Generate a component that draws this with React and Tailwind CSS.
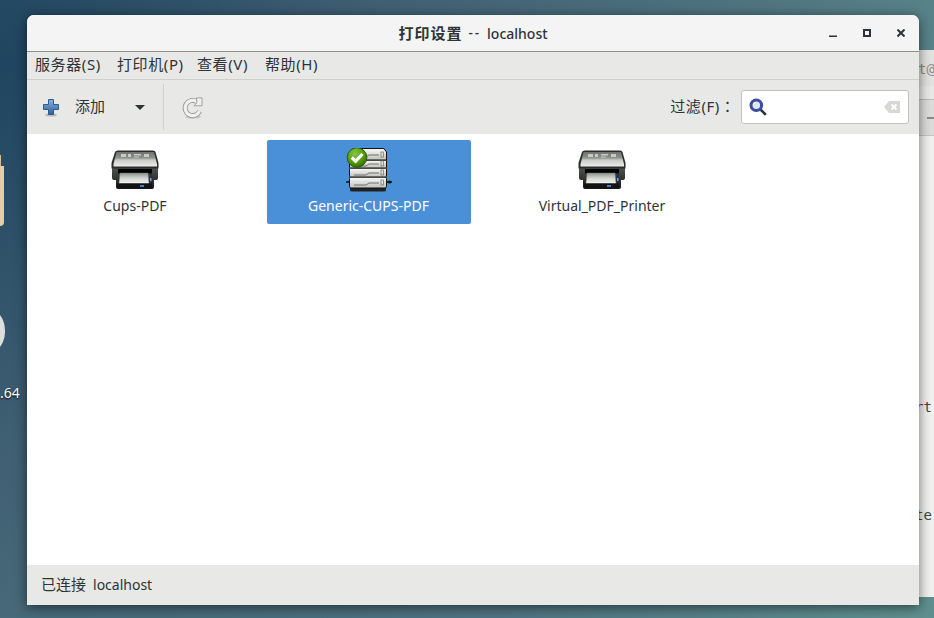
import React from 'react';

const FONT = "font-['Noto_Sans','Noto_Sans_CJK_SC',sans-serif]";

const MENUS = [
  { label: '服务器(S)', width: 'w-[82px]' },
  { label: '打印机(P)', width: 'w-[80px]' },
  { label: '查看(V)', width: 'w-[68px]' },
  { label: '帮助(H)', width: 'w-[66px]' },
];

const PRINTERS = [
  { name: 'Cups-PDF', icon: 'printer' },
  { name: 'Generic-CUPS-PDF', icon: 'server', selected: true },
  { name: 'Virtual_PDF_Printer', icon: 'printer' },
];

function PrinterIcon() {
  return (
    <svg width="48" height="40" viewBox="0 0 48 40">
      <defs>
        <linearGradient id="ptop" x1="0" y1="0" x2="0" y2="1">
          <stop offset="0" stopColor="#70726f" />
          <stop offset="0.4" stopColor="#8f918d" />
          <stop offset="0.55" stopColor="#c9cac6" />
          <stop offset="1" stopColor="#eeeeec" />
        </linearGradient>
        <linearGradient id="pbody" x1="0" y1="0" x2="0" y2="1">
          <stop offset="0" stopColor="#50524f" />
          <stop offset="1" stopColor="#161716" />
        </linearGradient>
        <linearGradient id="ppaper" x1="0" y1="0" x2="0" y2="1">
          <stop offset="0" stopColor="#8f928c" />
          <stop offset="0.5" stopColor="#d2d4cf" />
          <stop offset="1" stopColor="#f4f4f2" />
        </linearGradient>
      </defs>
      <path d="M1 18 H47 V28 Q47 30 44 30 H43 V37 Q43 39 41 39 H7 Q5 39 5 37 V30 H3 Q1 30 1 28 Z" fill="url(#pbody)" />
      <path d="M4 2 Q4.5 .5 7 .5 H42 Q44 .5 44.5 2 L47.5 13 V18.5 H.5 V13 Z" fill="#2b2c2b" />
      <path d="M5.5 2 H43 L46 14 V16.5 H2.5 V14 Z" fill="url(#ptop)" />
      <path d="M10 4 h5 v3 h-5 z M17 4 h3 v3 h-3 z M23 4 h7 v1.4 h-7 z M23 6.4 h5 v1 h-5 z M33 4 h5 v3 h-5 z" fill="#c9cac7" />
      <path d="M7 19 H41 V23.5 H7 Z" fill="#030303" />
      <path d="M9 23 H37 L38 33.5 H8 Z" fill="url(#ppaper)" stroke="#777" strokeWidth="0.4" />
      <path d="M6 33.5 H41 V38 H6 Z" fill="#121312" />
      <path d="M29 35 H33 V37 H29 Z" fill="#3f82d0" />
      <path d="M38.5 24 H41 V32 H38.5 Z" fill="#1d3550" />
      <path d="M39 28 H40.5 V31 H39 Z" fill="#6fa8e6" />
    </svg>
  );
}

function ServerIcon() {
  return (
    <svg width="46" height="44" viewBox="0 0 46 44">
      <defs>
        <linearGradient id="stray" x1="0" y1="0" x2="0" y2="1">
          <stop offset="0" stopColor="#fbfbfa" />
          <stop offset="1" stopColor="#bfc0bc" />
        </linearGradient>
        <radialGradient id="sgreen" cx="0.4" cy="0.3" r="0.8">
          <stop offset="0" stopColor="#8bc34a" />
          <stop offset="0.6" stopColor="#4e9a06" />
          <stop offset="1" stopColor="#2d5f04" />
        </radialGradient>
      </defs>
      <path d="M-1 34 H4 M41 34 H46" stroke="#111" strokeWidth="1.4" />
      <circle cx="43.5" cy="34" r="1.6" fill="#111" />
      <path d="M4 40 H40 V42 Q40 43.5 38 43.5 H6 Q4 43.5 4 42 Z" fill="#222" />
      <rect x="3.5" y="29" width="37" height="11" rx="1.5" fill="url(#stray)" stroke="#111" />
      <rect x="3.5" y="20" width="37" height="9" rx="1" fill="url(#stray)" stroke="#111" />
      <rect x="3.5" y="12" width="37" height="8" rx="1" fill="url(#stray)" stroke="#111" />
      <path d="M6 1.5 Q6.5 .5 8 .5 H37 Q38.5 .5 39 2 L40.5 4 V12 H3.5 V4 Z" fill="url(#stray)" stroke="#111" />
      {[9, 18, 27, 37].map((y) => (
        <g key={y}>
          <path d={`M8 ${y} H20 L23 ${y - 2} H33`} fill="none" stroke="#63655f" strokeWidth="0.9" />
          <rect x="35" y={y - 5} width="2.4" height="5" fill="none" stroke="#6e6e6e" strokeWidth="0.7" />
        </g>
      ))}
      <circle cx="11" cy="9.5" r="9.8" fill="url(#sgreen)" stroke="#274f05" strokeWidth="0.9" />
      <path d="M5.8 9.5 L9.6 13.2 L16.5 6" fill="none" stroke="#fff" strokeWidth="3.2" />
    </svg>
  );
}

function AddIcon() {
  return (
    <svg width="16" height="18" viewBox="0 0 16 18">
      <defs>
        <linearGradient id="plus" x1="0" y1="0" x2="0" y2="1">
          <stop offset="0" stopColor="#8fb1d9" />
          <stop offset="1" stopColor="#2c5f9e" />
        </linearGradient>
      </defs>
      <ellipse cx="8" cy="16" rx="6" ry="1.6" fill="#b8b8b5" />
      <path d="M5.5 .5 H10.5 V5.5 H15.5 V10.5 H10.5 V15.5 H5.5 V10.5 H.5 V5.5 H5.5 Z" fill="url(#plus)" stroke="#2f5b93" />
    </svg>
  );
}

function RefreshIcon() {
  return (
    <svg width="22" height="22" viewBox="0 0 22 22">
      <ellipse cx="11" cy="20.2" rx="8" ry="1.6" fill="#c8c8c5" />
      <path d="M17.6 14.2 A7.6 7.6 0 1 1 14.8 4.6" fill="none" stroke="#989896" strokeWidth="5" />
      <path d="M17.6 14.2 A7.6 7.6 0 1 1 14.8 4.6" fill="none" stroke="#f0f0ef" strokeWidth="3.2" />
      <path d="M14.2 1 L20 .8 V8.8 H12 L15 5.6 Z" fill="#f0f0ef" stroke="#989896" strokeWidth="0.9" />
    </svg>
  );
}

function SearchIcon() {
  return (
    <svg width="18" height="18" viewBox="0 0 18 18">
      <path d="M10.5 10.5 L16 16" stroke="#2e3436" strokeWidth="2.6" strokeLinecap="round" />
      <circle cx="7.3" cy="7.3" r="5.3" fill="#dfe6f5" stroke="#3b4da0" strokeWidth="3" />
      <path d="M4.5 6.5 A3 3 0 0 1 7 4.3" fill="none" stroke="#fff" strokeWidth="1" />
    </svg>
  );
}

function ClearIcon() {
  return (
    <svg width="16" height="12" viewBox="0 0 16 12">
      <path d="M5 0 H16 V12 H5 L0 6 Z" fill="#d8d8d6" />
      <path d="M7.5 3.5 L12.5 8.5 M12.5 3.5 L7.5 8.5" stroke="#fff" strokeWidth="1.8" />
    </svg>
  );
}

export default function App() {
  return (
    <div className={`relative h-[618px] w-[934px] overflow-hidden bg-[radial-gradient(circle_at_0%_10%,#1f4560_0%,#3f5f72_35%,#4f7480_70%,#5f8f8e_100%)] ${FONT}`}>
      {/* desktop icons, cut off by the window */}
      <div className="absolute left-0 top-[155px] h-[11px] w-px bg-[#d9bd92]" />
      <div className="absolute left-0 top-[166px] h-[60px] w-[4px] rounded-br-sm bg-[#e6cda6]" />
      <div className="absolute left-[-45px] top-[305px] h-[52px] w-[50px] rounded-full bg-[#dedede]" />
      <div className="absolute left-0 top-[383px] text-[14px] leading-5 text-white [text-shadow:0_1px_2px_#000]">.64</div>

      {/* terminal behind */}
      <div className="absolute left-[880px] top-[50px] flex h-[547px] w-[70px] flex-col bg-[#f0f0ef] font-['DejaVu_Sans_Mono',monospace] text-[14px] text-[#555]">
        <div className="h-[36px] bg-[#e2e2e1] pl-[38px] pt-[9px] leading-5 text-[#8c8c8a]">t@</div>
        <div className="h-[14px] border-b border-[#bbb] bg-[#e8e8e7]" />
        <div className="h-[36px] border-b border-[#c6c6c5] bg-[#dcdcdb] pt-[17px]">
          <div className="ml-[47px] h-[2px] w-[7px] bg-[#8a8a88]" />
        </div>
        <div className="pl-[35px] pt-[261px] leading-5 text-[#444]">rt</div>
        <div className="pl-[35px] pt-[88px] leading-5 text-[#444]">te:</div>
      </div>

      {/* window */}
      <div className="absolute left-[27px] top-[15px] flex h-[590px] w-[892px] flex-col overflow-hidden rounded-t-[7px] bg-white shadow-[0_2px_12px_rgba(0,0,0,0.55)]">
        <div className="box-content grid h-[36px] shrink-0 grid-cols-[1fr_auto_1fr] items-center border-b border-[#8f8f8b] bg-[#f4f4f4]">
          <div />
          <div className="flex items-center text-[#2e3436]">
            <span className="text-[15px] font-bold tracking-[1px]">打印设置</span>
            <span className="ml-[6px] text-[13.5px] font-medium tracking-[2px]">--</span>
            <span className="ml-[6px] text-[14px] font-medium">localhost</span>
          </div>
          <div className="flex items-center justify-end gap-[26px] pr-[14px] text-[#2e3436]">
            <svg width="8" height="8" viewBox="0 0 8 8"><path d="M0 6.5 H8 V8 H0 Z" fill="currentColor" /></svg>
            <svg width="8" height="8" viewBox="0 0 8 8"><path d="M1 1 H7 V7 H1 Z" fill="none" stroke="currentColor" strokeWidth="2" /></svg>
            <svg width="8" height="8" viewBox="0 0 8 8"><path d="M.5 .5 L7.5 7.5 M7.5 .5 L.5 7.5" stroke="currentColor" strokeWidth="2" /></svg>
          </div>
        </div>

        <div className="flex h-[28px] shrink-0 items-center border-b border-[#cfcfcc] bg-[#e8e8e7] pb-[2px] pl-[8px] text-[15px] tracking-[0.6px] text-[#2e3436]">
          {MENUS.map((m) => (
            <span key={m.label} className={m.width}>{m.label}</span>
          ))}
        </div>

        <div className="flex h-[54px] shrink-0 items-center bg-[#e8e8e7] text-[15px] text-[#2e3436]">
          <div className="ml-[16px] mt-[2px]"><AddIcon /></div>
          <span className="mb-[2px] ml-[16px]">添加</span>
          <div className="ml-[30px] h-0 w-0 border-x-[5.5px] border-t-[5px] border-x-transparent border-t-[#2e3436]" />
          <div className="ml-[18px] h-[46px] w-px bg-[#d0d0cd]" />
          <div className="ml-[18px] mt-[2px]"><RefreshIcon /></div>
          <span className="mb-[2px] ml-auto tracking-[0.6px]">过滤(F)</span>
          <span className="mb-[2px] font-['Noto_Sans_CJK_TC',sans-serif]">：</span>
          <div className="ml-[6px] mr-[10px] flex h-[34px] w-[168px] items-center justify-between rounded-[3px] border border-[#c2c2bf] bg-white pl-[7px] pr-[8px]">
            <SearchIcon />
            <ClearIcon />
          </div>
        </div>

        <div className="flex flex-1 items-start gap-[29.5px] bg-white pl-[6px] pt-[6px]">
          {PRINTERS.map((p) => (
            <div
              key={p.name}
              className={`flex h-[84px] w-[204px] flex-col items-center rounded-[2px] text-[14px] ${
                p.selected ? 'bg-[#4a90d9] text-white' : 'text-[#2e3436]'
              }`}
            >
              <div className={`flex h-[56px] items-end ${p.selected ? 'pb-[4px]' : 'pb-[6px]'}`}>
                {p.icon === 'server' ? <ServerIcon /> : <PrinterIcon />}
              </div>
              <div className="leading-5">{p.name}</div>
            </div>
          ))}
        </div>

        <div className="flex h-[40px] shrink-0 items-center gap-[7px] bg-[#e8e8e7] pb-[2px] pl-[14px] text-[15px] text-[#2e3436]">
          <span>已连接</span>
          <span className="text-[14px]">localhost</span>
        </div>
      </div>
    </div>
  );
}
